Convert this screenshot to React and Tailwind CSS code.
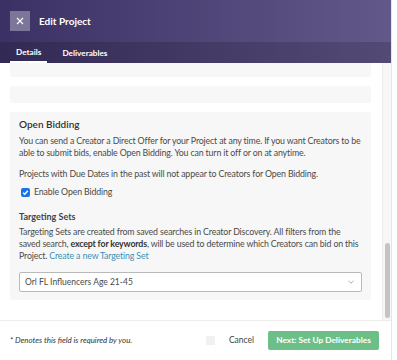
import React from "react";

const font = { fontFamily: "Lato, 'Open Sans', sans-serif" };

export default function App() {
  return (
    <div className="flex h-[360px] w-[397px] overflow-hidden bg-white" style={font}>
      {/* モーダル本体 */}
      <div className="flex h-full w-[391px] flex-col">
        {/* ヘッダー */}
        <div className="bg-gradient-to-r from-[#3c3164] to-[#62588a]">
          <div className="flex h-[42px] items-center gap-[9px] pl-[10px]">
            <button className="flex h-[20px] w-[20px] items-center justify-center bg-[#7c7699] text-white">
              <svg width="8" height="8" viewBox="0 0 8 8" stroke="currentColor" strokeWidth="1.1">
                <path d="M1 1l6 6M7 1L1 7" />
              </svg>
            </button>
            <h1 className="text-[10px] font-bold text-white">Edit Project</h1>
          </div>
          <div className="flex h-[21px] items-end bg-black/15 pl-[10px] text-[8.2px] font-bold text-white">
            <div className="flex h-full items-center border-b-2 border-white px-[6px] pt-[2px]">Details</div>
            <div className="flex h-full items-center pl-[15px] pt-[2px]">Deliverables</div>
          </div>
        </div>

        {/* 本文 (スクロール領域) */}
        <div className="flex min-h-0 flex-1">
          <div className="flex flex-1 flex-col gap-[9px] overflow-hidden pl-[10px] pr-[11px]">
            <div className="h-[14px] shrink-0 rounded-b-[2px] bg-[#f7f7f7]"></div>
            <div className="h-[17px] shrink-0 rounded-[2px] bg-[#f7f7f7]"></div>
            <div className="shrink-0 whitespace-nowrap rounded-[2px] bg-[#f7f7f7] px-[9px] pb-[8px] pt-[5px] text-[8.8px] leading-[12px] tracking-[-0.15px] text-[#4a4a4a]">
              <h2 className="text-[10px] font-semibold leading-[14px] tracking-normal text-[#333]">Open Bidding</h2>
              <p className="mt-[4px]">
                You can send a Creator a Direct Offer for your Project at any time. If you want Creators to be
                <br />
                able to submit bids, enable Open Bidding. You can turn it off or on at anytime.
              </p>
              <p className="mt-[9px]">Projects with Due Dates in the past will not appear to Creators for Open Bidding.</p>
              <label className="mt-[6px] flex h-[12px] items-center gap-[4px] pl-[2px]">
                <span className="flex h-[9px] w-[9px] items-center justify-center rounded-[2px] bg-[#1a73e8]">
                  <svg width="7" height="7" viewBox="0 0 8 8" fill="none" stroke="white" strokeWidth="1.7">
                    <path d="M1.3 4.2l1.8 1.8 3.6-4" />
                  </svg>
                </span>
                <span>Enable Open Bidding</span>
              </label>
              <h3 className="mt-[13px] text-[9px] font-bold leading-[12px] tracking-normal text-[#444]">Targeting Sets</h3>
              <p className="mt-[3px]">
                Targeting Sets are created from saved searches in Creator Discovery. All filters from the
                <br />
                saved search, <b className="text-[#333]">except for keywords</b>, will be used to determine which Creators can bid on this
                <br />
                Project. <a className="text-[#3d8fb8]">Create a new Targeting Set</a>
              </p>
              <div className="mt-[10px] flex h-[20px] items-center justify-between rounded-[2px] border border-[#b9b9b9] bg-white pl-[5px] pr-[7px] text-[8.5px] tracking-normal">
                <span>Orl FL Influencers Age 21-45</span>
                <svg width="6" height="4" viewBox="0 0 6 4" fill="none" stroke="#999" strokeWidth="0.8">
                  <path d="M0.5 0.8L3 3.2 5.5 0.8" />
                </svg>
              </div>
            </div>
          </div>
          {/* スクロールバー */}
          <div className="flex w-[9px] flex-col border-l border-[#ececec] bg-[#f7f7f7] pb-[2px]">
            <div className="flex-1"></div>
            <div className="mx-auto h-[75px] w-[5px] rounded-full bg-[#c4c4c4]"></div>
          </div>
        </div>

        {/* フッター */}
        <div className="flex h-[40px] shrink-0 items-center border-t border-[#ececec] pl-[10px] pr-[12px]">
          <span className="text-[7.9px] italic text-[#333]">* Denotes this field is required by you.</span>
          <span className="ml-auto h-[9px] w-[9px] bg-[#f1f1f1]"></span>
          <button className="ml-[14px] text-[8.5px] text-[#444]">Cancel</button>
          <button className="ml-[14px] h-[19px] w-[111px] rounded-[2px] bg-[#6cbf86] text-[8.3px] font-bold text-white">
            Next: Set Up Deliverables
          </button>
        </div>
      </div>
      <div className="flex-1 border-l border-[#e6e6e6] bg-white"></div>
    </div>
  );
}
